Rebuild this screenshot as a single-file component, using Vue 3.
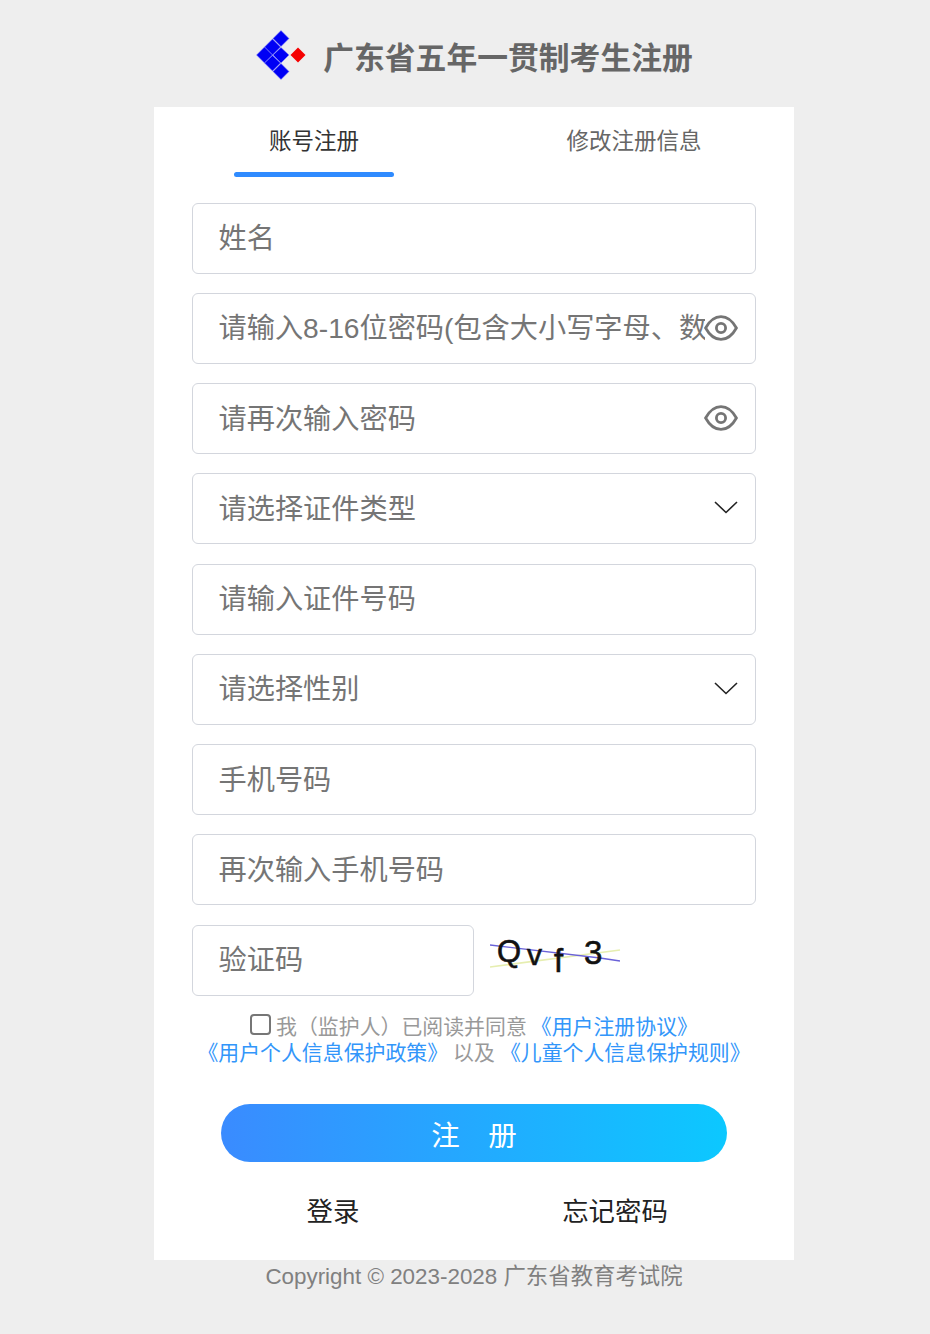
<script setup>
const fields = [
  { id: 'name', placeholder: '姓名' },
  { id: 'pwd', placeholder: '请输入8-16位密码(包含大小写字母、数字和特殊字符)', icon: 'eye' },
  { id: 'pwd2', placeholder: '请再次输入密码', icon: 'eye' },
  { id: 'idType', placeholder: '请选择证件类型', icon: 'arrow' },
  { id: 'idNo', placeholder: '请输入证件号码' },
  { id: 'gender', placeholder: '请选择性别', icon: 'arrow' },
  { id: 'phone', placeholder: '手机号码' },
  { id: 'phone2', placeholder: '再次输入手机号码' },
]
</script>

<template>
  <div class="page">
    <header class="brand">
      <svg class="logo" width="50" height="50" viewBox="0 0 50 50">
        <g fill="#0000f5" stroke="#8a8aff" stroke-width="0.5">
          <path d="M25 0.5 L33 8.5 L25 16.5 L17 8.5 Z" />
          <path d="M16.5 9 L24.5 17 L16.5 25 L8.5 17 Z" />
          <path d="M8.5 17 L16.5 25 L8.5 33 L0.5 25 Z" />
          <path d="M25 17.5 L33 25 L25 33 L17 25 Z" />
          <path d="M16.5 25.5 L24.5 33 L16.5 41 L8.5 33 Z" />
          <path d="M25 33.5 L33 41.5 L25 49.5 L17 41.5 Z" />
        </g>
        <path fill="#f50000" d="M42 17.5 L49.5 25 L42 32.5 L34.5 25 Z" />
      </svg>
      <h1>广东省五年一贯制考生注册</h1>
    </header>

    <main class="card">
      <nav class="tabs">
        <div class="tab active">账号注册</div>
        <div class="tab">修改注册信息</div>
      </nav>

      <form class="form" @submit.prevent>
        <div v-for="field in fields" :key="field.id" class="field">
          <input type="text" :placeholder="field.placeholder" />
          <svg v-if="field.icon === 'eye'" class="eye" width="34" height="26" viewBox="0 0 34 26" fill="none" stroke="#757575" stroke-width="2.8">
            <path d="M1.6 13 C6 5 11 1.6 17 1.6 C23 1.6 28 5 32.4 13 C28 21 23 24.4 17 24.4 C11 24.4 6 21 1.6 13 Z" />
            <circle cx="17" cy="13" r="4.6" />
          </svg>
          <svg v-if="field.icon === 'arrow'" class="arrow" width="24" height="13" viewBox="0 0 24 13" fill="none" stroke="#222" stroke-width="1.6">
            <path d="M1 1 L12 11.5 L23 1" />
          </svg>
        </div>

        <div class="captcha-row">
          <div class="field captcha-input">
            <input type="text" placeholder="验证码" />
          </div>
          <svg class="captcha" width="132" height="56" viewBox="0 0 132 56">
            <path d="M0 42 L130 25" stroke="#e6eeb0" stroke-width="1.6" />
            <path d="M0 20 L110 33 L130 36" stroke="#6a62d8" stroke-width="1.3" fill="none" />
            <text x="7" y="37" class="cap-text" font-size="31">Q</text>
            <text x="37" y="40" class="cap-text" font-size="30">v</text>
            <text x="64" y="47" class="cap-text" font-size="33">f</text>
            <text x="94" y="39" class="cap-text" font-size="33">3</text>
          </svg>
        </div>

        <div class="agree">
          <div class="agree-line">
            <span class="check"></span>
            <span class="muted">我（监护人）已阅读并同意</span>
            <a class="gap-left">《用户注册协议》</a>
          </div>
          <div class="agree-line">
            <a>《用户个人信息保护政策》</a>
            <span class="muted gap-both">以及</span>
            <a>《儿童个人信息保护规则》</a>
          </div>
        </div>

        <button class="submit" type="submit"><span>注&emsp;册</span></button>

        <div class="links">
          <a>登录</a>
          <a>忘记密码</a>
        </div>
      </form>
    </main>

    <footer class="copyright">Copyright © 2023-2028 广东省教育考试院</footer>
  </div>
</template>

<style scoped>
.page {
  width: 640px;
  min-height: 1334px;
  margin-left: 154px;
  font-family: "Liberation Sans", "Noto Sans CJK SC", sans-serif;
}

.brand {
  height: 107px;
  display: flex;
  align-items: center;
  justify-content: center;
  gap: 17px;
  padding: 3px 0 0 2px;
  box-sizing: border-box;
}

.logo {
  flex: none;
  margin-left: -1px;
}

.brand h1 {
  margin: 0;
  font-size: 30.8px;
  font-weight: 700;
  color: #666;
  white-space: nowrap;
}

.card {
  height: 1153px;
  background: #fff;
  box-sizing: border-box;
}

.tabs {
  display: grid;
  grid-template-columns: 1fr 1fr;
  height: 70px;
}

.tab {
  position: relative;
  padding-top: 20px;
  text-align: center;
  font-size: 22.5px;
  line-height: 30px;
  color: #666;
}

.tab.active {
  color: #333;
}

.tab.active::after {
  content: "";
  position: absolute;
  left: 80px;
  bottom: 0;
  width: 160px;
  height: 5px;
  border-radius: 3px;
  background: #2f8bff;
}

.form {
  padding: 25.7px 38px 0;
}

.field {
  position: relative;
  height: 71px;
  margin-bottom: 19.25px;
}

.field input {
  width: 100%;
  height: 100%;
  box-sizing: border-box;
  padding: 1px 50px 0 25.5px;
  border: 1px solid #d3d6dd;
  border-radius: 6px;
  outline: none;
  background: #fff;
  font-family: inherit;
  font-size: 28.2px;
  color: #333;
}

.field input::placeholder {
  color: #757575;
  opacity: 1;
}

.eye {
  position: absolute;
  right: 18px;
  top: 22px;
}

.arrow {
  position: absolute;
  right: 18px;
  top: 28px;
}

.captcha-row {
  display: flex;
  align-items: flex-start;
  gap: 16px;
}

.captcha-input {
  width: 282px;
  margin-bottom: 0;
}

.captcha {
  flex: none;
}

.cap-text {
  font-family: "Liberation Sans", sans-serif;
  fill: #111;
  stroke: #111;
  stroke-width: 0.6;
}

.agree {
  margin-top: 18.8px;
  text-align: center;
  font-size: 20.9px;
  line-height: 26px;
}

.agree-line {
  white-space: nowrap;
}

.check {
  display: inline-block;
  width: 17px;
  height: 17px;
  margin-right: 5px;
  border: 2px solid #767676;
  border-radius: 4px;
  vertical-align: -1px;
}

.muted {
  color: #999;
}

.gap-left {
  margin-left: 4px;
}

.gap-both {
  margin: 0 5px;
}

.agree a {
  color: #3296fa;
}

.submit {
  display: block;
  width: 506px;
  height: 58px;
  margin: 37.5px 0 0 29px;
  padding: 2px 0 0;
  border: 0;
  border-radius: 29px;
  background: linear-gradient(90deg, #3a8bff, #0cc8ff);
  font-family: inherit;
  font-size: 28.5px;
  color: #fff;
}

.links {
  display: grid;
  grid-template-columns: 282px 282px;
  margin-top: 32px;
  text-align: center;
  font-size: 26.4px;
  line-height: 36px;
  color: #222;
}

.copyright {
  text-align: center;
  font-size: 22.4px;
  line-height: 34px;
  color: #808080;
}
</style>

<style>
html,
body {
  background: #eee;
}
</style>
